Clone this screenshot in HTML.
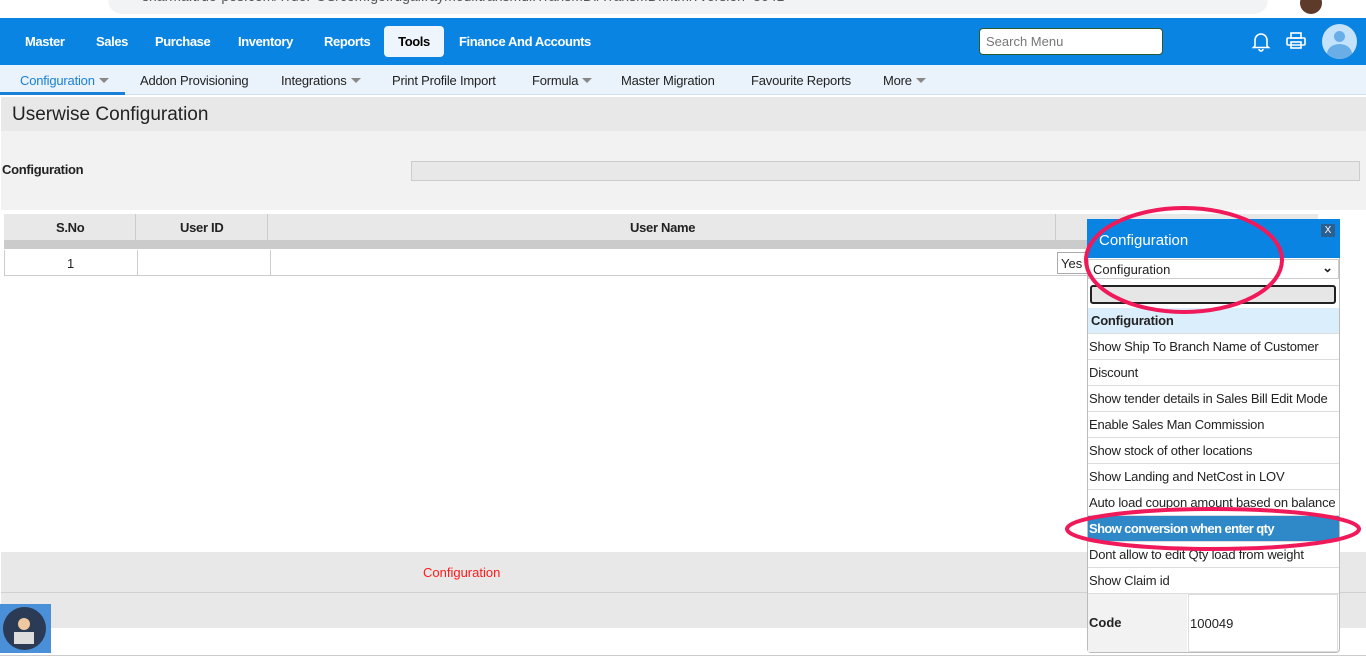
<!DOCTYPE html>
<html><head><style>
*{box-sizing:border-box;margin:0;padding:0}
body{width:1366px;height:656px;overflow:hidden;background:#fff;font-family:"Liberation Sans",sans-serif;font-size:13px;color:#222;position:relative}
.abs{position:absolute}
.chrome{top:0;left:0;width:1366px;height:18px;background:#fff}
.url{left:108px;top:-14px;width:1160px;height:28px;border-radius:14px;background:#f1f3f4;color:#555;font-size:14px;padding:2px 34px}
.nav{top:18px;left:0;width:1366px;height:47px;background:#0a84e3}
.nav span{position:absolute;top:16px;color:#fff;font-weight:bold;font-size:13px;letter-spacing:-.4px}
.tools{position:absolute;left:384px;top:8px;width:60px;height:31px;background:#eef5fc;border-radius:4px;color:#000;font-weight:bold;text-align:center;line-height:31px;letter-spacing:-.4px}
.search{left:979px;top:28px;width:184px;height:27px;background:#fff;border:1px solid #2d5a2d;border-radius:4px;color:#777;font-size:13px;padding:5px 6px}
.sub{top:65px;left:0;width:1366px;height:30px;background:#eaf3fc;border-bottom:1px solid #cfe0f0}
.sub span{position:absolute;top:8px;font-size:13px;color:#222;letter-spacing:-.2px}
.car{display:inline-block;width:0;height:0;border-left:5px solid transparent;border-right:5px solid transparent;border-top:5px solid #888;margin-left:4px;vertical-align:2px}
td,th{border:1px solid #ccc}
.row{position:absolute;left:1088px;width:251px;height:26px;border-bottom:1px solid #ddd;background:#fff;font-size:13px;padding:5px 1px;white-space:nowrap;overflow:hidden;letter-spacing:-.2px}
</style></head><body>
<div class="abs chrome"><div class="abs url">sharma.true-pos.com/TruePOS/com.gofrugal.raymedi.transmdi.TransMDI/TransMDI.html?version=3641</div>
<div class="abs" style="left:1300px;top:-8px;width:22px;height:22px;border-radius:11px;background:#5d3a2a"></div></div>
<div class="abs nav">
<span style="left:25px">Master</span><span style="left:96px">Sales</span><span style="left:155px">Purchase</span><span style="left:238px">Inventory</span><span style="left:324px">Reports</span>
<div class="tools">Tools</div><span style="left:459px">Finance And Accounts</span>
<svg class="abs" style="left:1250px;top:12px" width="22" height="22" viewBox="0 0 22 22" fill="none" stroke="#fff" stroke-width="1.6"><path d="M5 16V10a6 6 0 0 1 12 0v6l1.5 1.5h-15z M9 19a2 2 0 0 0 4 0"/></svg>
<svg class="abs" style="left:1285px;top:13px" width="22" height="20" viewBox="0 0 22 20" fill="none" stroke="#fff" stroke-width="1.6"><rect x="6" y="2" width="10" height="5"/><rect x="2" y="7" width="18" height="7" rx="1"/><rect x="6" y="11" width="10" height="6"/></svg>
<div class="abs" style="left:1322px;top:6px;width:35px;height:35px;border-radius:50%;background:#c5e2fb;overflow:hidden"><div class="abs" style="left:12px;top:7px;width:11px;height:11px;border-radius:50%;background:#6aaee8"></div><div class="abs" style="left:5px;top:20px;width:25px;height:20px;border-radius:50%;background:#6aaee8"></div></div>
</div>
<div class="abs search">Search Menu</div>
<div class="abs sub">
<span style="left:20px;color:#1a7fd6">Configuration<i class="car"></i></span>
<div class="abs" style="left:0;top:27px;width:125px;height:3px;background:#1a7fd6"></div>
<span style="left:140px">Addon Provisioning</span><span style="left:281px">Integrations<i class="car"></i></span><span style="left:392px">Print Profile Import</span><span style="left:532px">Formula<i class="car"></i></span><span style="left:621px">Master Migration</span><span style="left:751px">Favourite Reports</span><span style="left:883px">More<i class="car"></i></span>
</div>
<div class="abs" style="left:1px;top:97px;width:1365px;height:34px;background:#e8e8e8;font-size:19px;padding:7px 11px;color:#222">Userwise Configuration</div>
<div class="abs" style="left:1px;top:131px;width:1365px;height:79px;background:#f2f2f2"></div>
<div class="abs" style="left:2px;top:162px;font-size:13px;font-weight:bold;letter-spacing:-.3px">Configuration</div>
<div class="abs" style="left:411px;top:161px;width:949px;height:20px;background:#e8e8e8;border:1px solid #ccc"></div>
<div class="abs" style="left:4px;top:214px;width:1314px;height:26px;background:#e8e8e8"></div>
<div class="abs" style="left:4px;top:240px;width:1314px;height:9px;background:#cbcbcb"></div>
<div class="abs" style="left:135px;top:214px;width:1px;height:26px;background:#ccc"></div>
<div class="abs" style="left:267px;top:214px;width:1px;height:26px;background:#ccc"></div>
<div class="abs" style="left:1055px;top:214px;width:1px;height:26px;background:#ccc"></div>
<div class="abs" style="left:56px;top:220px;font-weight:bold;letter-spacing:-.3px">S.No</div>
<div class="abs" style="left:180px;top:220px;font-weight:bold;letter-spacing:-.3px">User ID</div>
<div class="abs" style="left:630px;top:220px;font-weight:bold;letter-spacing:-.3px">User Name</div>
<div class="abs" style="left:4px;top:250px;width:1100px;height:26px;border:1px solid #ccc;border-top:0"></div>
<div class="abs" style="left:137px;top:250px;width:1px;height:26px;background:#ccc"></div>
<div class="abs" style="left:270px;top:250px;width:1px;height:26px;background:#ccc"></div>
<div class="abs" style="left:67px;top:256px">1</div>
<div class="abs" style="left:1057px;top:252px;width:40px;height:22px;border:1px solid #aaa;padding:3px 3px">Yes</div>
<div class="abs" style="left:1px;top:552px;width:1365px;height:76px;background:#e8e8e8"></div>
<div class="abs" style="left:1px;top:592px;width:1365px;height:1px;background:#d0d0d0"></div>
<div class="abs" style="left:423px;top:565px;color:#ff1a1a">Configuration</div>
<div class="abs" style="left:0;top:655px;width:1366px;height:1px;background:#ccc"></div>
<div class="abs" style="left:0;top:604px;width:51px;height:49px;background:#4a90d9"><div class="abs" style="left:3px;top:3px;width:43px;height:43px;border-radius:50%;background:#2b3a55"></div><div class="abs" style="left:14px;top:28px;width:20px;height:12px;background:#ddd"></div><div class="abs" style="left:18px;top:14px;width:12px;height:12px;border-radius:50%;background:#f0c8a0"></div></div>
<!-- popup -->
<div class="abs" style="left:1087px;top:219px;width:253px;height:434px;background:#fff;border:1px solid #bbb;border-radius:0 0 4px 4px"></div>
<div class="abs" style="left:1087px;top:219px;width:253px;height:39px;background:#0a84e3;color:#fff;font-size:15px;padding:13px 12px">Configuration</div>
<div class="abs" style="left:1321px;top:224px;width:14px;height:13px;background:#2a5f8f;color:#fff;font-size:10px;text-align:center;line-height:13px">X</div>
<div class="abs" style="left:1088px;top:259px;width:251px;height:20px;border:1px solid #ccc;padding:2px 4px;font-size:13px">Configuration<span class="abs" style="right:5px;top:0;font-weight:bold">&#8964;</span></div>
<div class="abs" style="left:1090px;top:285px;width:246px;height:19px;background:#e6e6e6;border:2px solid #222;border-radius:3px"></div>
<div class="row" style="top:308px;background:#dbeefc;font-weight:bold;padding-left:3px">Configuration</div>
<div class="row" style="top:334px">Show Ship To Branch Name of Customer</div>
<div class="row" style="top:360px">Discount</div>
<div class="row" style="top:386px">Show tender details in Sales Bill Edit Mode</div>
<div class="row" style="top:412px">Enable Sales Man Commission</div>
<div class="row" style="top:438px">Show stock of other locations</div>
<div class="row" style="top:464px">Show Landing and NetCost in LOV</div>
<div class="row" style="top:490px">Auto load coupon amount based on balance</div>
<div class="row" style="top:516px;background:#2f88c8;color:#fff;font-weight:bold;letter-spacing:-.6px">Show conversion when enter qty</div>
<div class="row" style="top:542px">Dont allow to edit Qty load from weight</div>
<div class="row" style="top:568px">Show Claim id</div>
<div class="abs" style="left:1088px;top:594px;width:99px;height:58px;background:#f2f2f2;font-weight:bold;padding:21px 1px">Code</div>
<div class="abs" style="left:1188px;top:594px;width:150px;height:58px;border:1px solid #ddd;padding:21px 1px">100049</div>
<svg class="abs" style="left:0;top:0" width="1366" height="656"><ellipse cx="1184" cy="260" rx="98" ry="52" fill="none" stroke="#f0195a" stroke-width="4"/><ellipse cx="1213" cy="529" rx="146" ry="20" fill="none" stroke="#f0195a" stroke-width="4"/></svg>
</body></html>
